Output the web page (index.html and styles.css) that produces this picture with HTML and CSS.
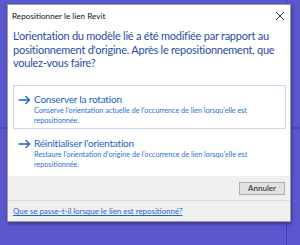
FILE: index.html
```html
<!DOCTYPE html>
<html lang="fr">
<head>
<meta charset="utf-8">
<link rel="stylesheet" href="styles.css">
</head>
<body>
<div class="dialog">
  <div class="titlebar">
    <span class="title">Repositionner le lien Revit</span>
    <svg class="close" width="10" height="10" viewBox="0 0 10 10"><path d="M1 1L9 9M9 1L1 9" stroke="#333" stroke-width="1"/></svg>
  </div>
  <div class="body">
    <p class="main">L'orientation du modèle lié a été modifiée par rapport au positionnement d'origine. Après le repositionnement, que voulez-vous faire?</p>
    <div class="option hover">
      <svg class="arrow" width="13" height="10" viewBox="0 0 13 10"><path d="M0.5 5H11.5M7.5 1L11.5 5L7.5 9" fill="none" stroke="#1a66c8" stroke-width="1.3"/></svg>
      <div class="otext">
        <div class="ohead">Conserver la rotation</div>
        <div class="odesc">Conserve l'orientation actuelle de l'occurrence de lien lorsqu'elle est repositionnée.</div>
      </div>
    </div>
    <div class="option">
      <svg class="arrow" width="13" height="10" viewBox="0 0 13 10"><path d="M0.5 5H11.5M7.5 1L11.5 5L7.5 9" fill="none" stroke="#1a66c8" stroke-width="1.3"/></svg>
      <div class="otext">
        <div class="ohead">Réinitialiser l'orientation</div>
        <div class="odesc">Restaure l'orientation d'origine de l'occurrence de lien lorsqu'elle est repositionnée.</div>
      </div>
    </div>
  </div>
  <div class="buttons">
    <button class="btn">Annuler</button>
  </div>
  <div class="footer">
    <a class="link" href="#">Que se passe-t-il lorsque le lien est repositionné?</a>
  </div>
</div>
</body>
</html>
```
FILE: styles.css
```css
html, body {
  margin: 0;
  padding: 0;
}
body {
  width: 300px;
  height: 245px;
  overflow: hidden;
  background-color: #5a57cf;
  background-image:
    linear-gradient(to bottom, transparent 127px, #4a46c0 127px, #4a46c0 129px, transparent 129px),
    linear-gradient(to right, transparent 286px, #3f3cc8 286px, #3f3cc8 287px, transparent 287px);
  padding: 4px 0 0 7px;
  box-sizing: border-box;
  font-family: Lato, "Open Sans", sans-serif;
}
.dialog {
  width: 284px;
  height: 218px;
  box-sizing: border-box;
  background: #fff;
  border: 1px solid #9a9a9a;
  box-shadow: 1px 2px 3px rgba(0,0,0,0.35);
  display: flex;
  flex-direction: column;
}
.titlebar {
  height: 21px;
  display: flex;
  align-items: center;
  justify-content: space-between;
  padding: 0 5px 0 4px;
}
.title {
  font-size: 8.2px;
  color: #111;
}
.close {
  display: block;
}
.body {
  flex: 1;
  padding: 0 4px 0 5px;
}
.main {
  margin: 3px 0 0 0;
  font-size: 11px;
  letter-spacing: -0.25px;
  line-height: 13.5px;
  color: #1f4ea3;
}
.option {
  margin-top: 15px;
  height: 44px;
  box-sizing: border-box;
  border: 1px solid transparent;
  display: flex;
  align-items: flex-start;
  padding: 7px 0 0 4px;
}
.option + .option {
  margin-top: 0;
}
.option.hover {
  border-color: #c5daf0;
}
.arrow {
  margin-top: 2px;
  margin-right: 3px;
  flex: none;
}
.ohead {
  font-size: 10px;
  letter-spacing: -0.2px;
  line-height: 13px;
  color: #1a62c4;
}
.odesc {
  font-size: 7.2px;
  line-height: 10px;
  color: #2a72d0;
}
.buttons {
  background: #f0f0f0;
  height: 24px;
  display: flex;
  align-items: center;
  justify-content: flex-end;
  padding-right: 5px;
  border-bottom: 1px solid #dcdcdc;
}
.btn {
  width: 46px;
  height: 13px;
  padding: 0;
  font-family: inherit;
  font-size: 8px;
  color: #222;
  background: #e1e1e1;
  border: 1px solid #adadad;
  border-radius: 0;
}
.footer {
  background: #f0f0f0;
  height: 20px;
  display: flex;
  align-items: center;
  padding-left: 5px;
}
.link {
  font-size: 7.9px;
  color: #1a66cc;
  text-decoration: underline;
}
```
